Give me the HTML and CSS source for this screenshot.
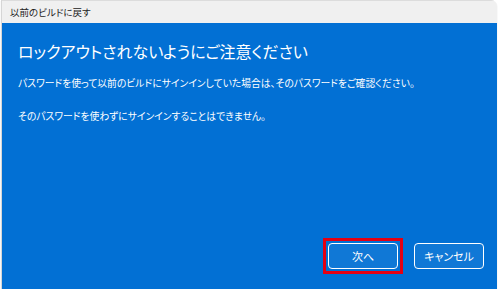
FILE: index.html
```html
<!DOCTYPE html>
<html lang="ja">
<head>
  <meta charset="UTF-8" />
  <title>以前のビルドに戻す</title>
  <meta name="viewport" content="width=device-width, initial-scale=1">
  <link rel="stylesheet" href="styles.css">
</head>
<body>
  <div class="window">
    <div class="titlebar">以前のビルドに戻す</div>

    <div class="content">
      <h1>ロックアウトされないようにご注意ください</h1>
      <p>パスワードを使って以前のビルドにサインインしていた場合は、そのパスワードをご確認ください。</p>
      <p>そのパスワードを使わずにサインインすることはできません。</p>

      <div class="actions">
        <span class="highlight"><button class="btn">次へ</button></span>
        <button class="btn">キャンセル</button>
      </div>
    </div>
  </div>
</body>
</html>
```

FILE: styles.css
```css
body {
  font-family: "Noto Sans CJK JP", "Noto Sans", sans-serif;
  background: #fff;
  margin: 0;
  padding: 0;
}
.window {
  width: 496px;
  height: 289px;
  margin-left: 1px;
  display: flex;
  flex-direction: column;
  border-top-right-radius: 6px;
  overflow: hidden;
  box-shadow: 0 1px 1px rgba(0,0,0,0.25);
  border-left: 1px solid #d6d6d6;
  box-sizing: border-box;
}
.titlebar {
  height: 23px;
  background: #f0f0f0;
  color: #222;
  font-size: 9.5px;
  line-height: 23px;
  padding-left: 8px;
  font-feature-settings: "palt";
  border-top: 1px solid #dcdcdc;
  box-sizing: border-box;
}
.content {
  flex: 1;
  background: #0270d4;
  color: #fff;
  padding: 16px 13px 15px 16px;
  display: flex;
  flex-direction: column;
}
h1 {
  font-size: 16px;
  font-weight: normal;
  margin: 0 0 12px;
  line-height: 24px;
  font-feature-settings: "palt";
}
p {
  font-size: 9.8px;
  margin: 0 0 16px;
  line-height: 17px;
  font-feature-settings: "palt";
}
.actions {
  margin-top: auto;
  display: flex;
  justify-content: flex-end;
  align-items: center;
  gap: 11px;
}
.highlight {
  display: flex;
  padding: 2px;
  border: 3px solid #e60012;
}
.btn {
  width: 70px;
  height: 26px;
  background: #1078d6;
  color: #fff;
  border: 1.5px solid #fff;
  border-radius: 4px;
  font-family: inherit;
  font-size: 11px;
  font-feature-settings: "palt";
  cursor: pointer;
}
```
